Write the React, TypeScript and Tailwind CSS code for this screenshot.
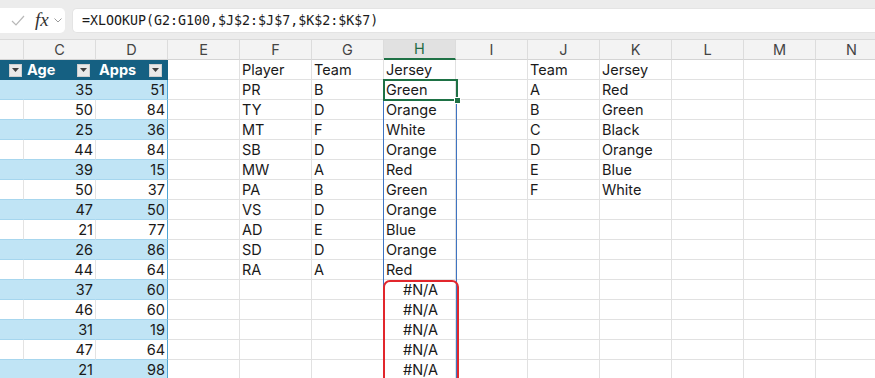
import React from "react";

const COLS = ["B", "C", "D", "E", "F", "G", "H", "I", "J", "K", "L", "M", "N"];
const W: Record<string, string> = {
  B: "w-[24px]",
};

const age = [35, 50, 25, 44, 39, 50, 47, 21, 26, 44, 37, 46, 31, 47, 21];
const apps = [51, 84, 36, 84, 15, 37, 50, 77, 86, 64, 60, 60, 19, 64, 98];
const player = ["PR", "TY", "MT", "SB", "MW", "PA", "VS", "AD", "SD", "RA"];
const team = ["B", "D", "F", "D", "A", "B", "D", "E", "D", "A"];
const jersey = ["Green", "Orange", "White", "Orange", "Red", "Green", "Orange", "Blue", "Orange", "Red"];
const lkTeam = ["A", "B", "C", "D", "E", "F"];
const lkJersey = ["Red", "Green", "Black", "Orange", "Blue", "White"];

function FilterBtn() {
  return (
    <div className="w-[13px] h-[13px] bg-[#e9e9e9] border border-[#cfcfcf] flex items-center justify-center shrink-0">
      <svg width="7" height="4" viewBox="0 0 7 4">
        <path d="M0 0 L7 0 L3.5 4 Z" fill="#404040" />
      </svg>
    </div>
  );
}

function textFor(col: string, r: number): { t: string; align: "l" | "r" | "c" } | null {
  const i = r - 2;
  if (col === "C" && r >= 2) return { t: String(age[i]), align: "r" };
  if (col === "D" && r >= 2) return { t: String(apps[i]), align: "r" };
  if (col === "F") {
    if (r === 1) return { t: "Player", align: "l" };
    if (i < player.length) return { t: player[i], align: "l" };
  }
  if (col === "G") {
    if (r === 1) return { t: "Team", align: "l" };
    if (i < team.length) return { t: team[i], align: "l" };
  }
  if (col === "H") {
    if (r === 1) return { t: "Jersey", align: "l" };
    if (i < jersey.length) return { t: jersey[i], align: "l" };
    return { t: "#N/A", align: "c" };
  }
  if (col === "J") {
    if (r === 1) return { t: "Team", align: "l" };
    if (i < lkTeam.length) return { t: lkTeam[i], align: "l" };
  }
  if (col === "K") {
    if (r === 1) return { t: "Jersey", align: "l" };
    if (i < lkJersey.length) return { t: lkJersey[i], align: "l" };
  }
  return null;
}

function Row({ r }: { r: number }) {
  return (
    <div className="flex h-[20px]">
      {COLS.map((c) => {
        const w = W[c] ?? "w-[72px]";
        const inTable = c === "B" || c === "C" || c === "D";
        if (inTable && r === 1) {
          const label = c === "C" ? "Age" : c === "D" ? "Apps" : "";
          return (
            <div
              key={c}
              className={`${w} shrink-0 h-[20px] bg-[#156082] flex items-center justify-between pl-[3px] ${c === "C" ? "pr-[6px]" : c === "D" ? "pr-[5px]" : "pr-[2px]"} ${c === "D" ? "border-r border-[#156082]" : ""}`}
            >
              <span className="text-white font-bold text-[14.5px] leading-[20px]">{label}</span>
              <FilterBtn />
            </div>
          );
        }
        if (inTable) {
          const band = r % 2 === 0;
          const tx = textFor(c, r);
          return (
            <div
              key={c}
              className={`${w} shrink-0 h-[20px] border-b border-[#a6d6ee] ${band ? "bg-[#c0e4f5]" : "bg-white"} ${
                c === "D" ? "border-r border-r-[#4ea5d4]" : band ? "border-r border-r-[#c0e4f5]" : "border-r border-r-[#e3e3e3]"
              } flex items-center justify-end pr-[2px]`}
            >
              {tx && <span className="text-[14.5px] leading-[20px] text-[#1a1a1a]">{tx.t}</span>}
            </div>
          );
        }
        const tx = textFor(c, r);
        return (
          <div
            key={c}
            className={`${w} shrink-0 h-[20px] border-r border-b border-[#e1e1e1] flex items-center ${
              tx?.align === "c" ? "justify-center" : "justify-start"
            } pl-[2px]`}
          >
            {tx && <span className="text-[14.5px] leading-[20px] text-[#1a1a1a] whitespace-nowrap">{tx.t}</span>}
          </div>
        );
      })}
    </div>
  );
}

export default function App() {
  const rows = Array.from({ length: 16 }, (_, k) => k + 1);
  return (
    <div className="w-[875px] h-[378px] overflow-hidden bg-white relative [font-family:Inter,'Liberation_Sans',sans-serif]">
      {/* formula bar */}
      <div className="h-[40px] bg-[#ececec] pt-[8px] pb-[7px] flex gap-[7px] border-b border-[#dadada]">
        <div className="w-[65px] h-[25px] bg-white rounded-r-[5px] flex items-center pl-[11px] gap-[10px]">
          <svg width="14" height="11" viewBox="0 0 14 11">
            <path d="M1 6 L5 10 L13 1" stroke="#b8b8b8" strokeWidth="1.2" fill="none" />
          </svg>
          <span className="[font-family:'Liberation_Serif',serif] italic text-[19px] text-[#333] leading-none -mt-[2px]">fx</span>
          <svg width="8" height="5" viewBox="0 0 8 5" className="-ml-[5px]">
            <path d="M0.5 0.5 L4 4 L7.5 0.5" stroke="#9a9a9a" strokeWidth="1" fill="none" />
          </svg>
        </div>
        <div className="flex-1 h-[25px] bg-white rounded-l-[5px] border border-r-0 border-[#e4e4e4] flex items-center pl-[9px]">
          <span className="[font-family:'DejaVu_Sans_Mono',monospace] text-[13.3px] text-[#1a1a1a] whitespace-nowrap">
            =XLOOKUP(G2:G100,$J$2:$J$7,$K$2:$K$7)
          </span>
        </div>
      </div>
      {/* column headers */}
      <div className="flex h-[20px] bg-[#f3f3f3]">
        {COLS.map((c) => {
          const w = W[c] ?? "w-[72px]";
          const sel = c === "H";
          return (
            <div
              key={c}
              className={`${w} shrink-0 h-[20px] flex items-center justify-center border-r border-[#dcdcdc] ${
                sel ? "bg-[#e1e1e1] text-[#1e6b43] border-b-2 border-b-[#1e7145]" : "text-[#444] border-b border-b-[#d4d4d4]"
              } text-[14.5px]`}
            >
              {c === "B" ? "" : c}
            </div>
          );
        })}
      </div>
      {rows.map((r) => (
        <Row key={r} r={r} />
      ))}

      {/* spill range border */}
      <div className="absolute left-[383px] top-[80px] w-[74px] h-[300px] border-x border-[#3f74c2] pointer-events-none" />
      {/* active cell */}
      <div className="absolute left-[383px] top-[79px] w-[75px] h-[22px] border-2 border-[#1e7145] pointer-events-none" />
      <div className="absolute left-[454px] top-[97px] w-[7px] h-[7px] bg-[#1e7145] border border-white pointer-events-none" />
      {/* red annotation */}
      <div className="absolute left-[383px] top-[280px] w-[76px] h-[110px] border-2 border-[#e2262c] rounded-[7px] pointer-events-none" />
    </div>
  );
}
